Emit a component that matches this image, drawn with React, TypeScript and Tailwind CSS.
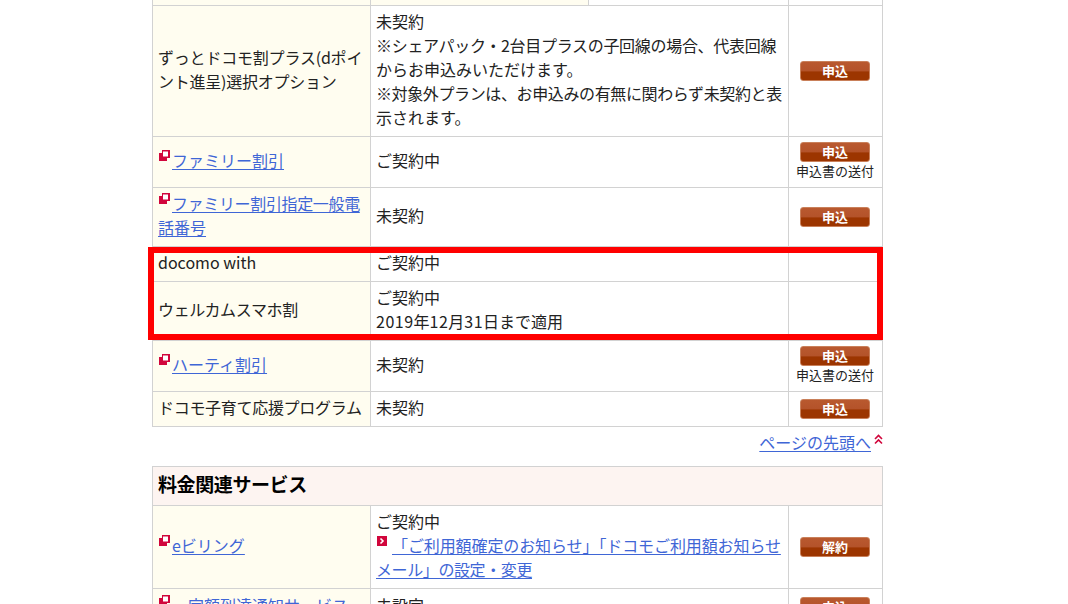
const LINK = "text-[#3f66d6] underline underline-offset-2"

function Book() {
  return (
    <svg width="11" height="11" viewBox="0 0 11 11" className="absolute left-[1px] top-[2px]" aria-hidden="true">
      <path d="M3 0 H11 V8 H8 V11 H0 V3 H3 Z" fill="#d1063c" />
      <rect x="4" y="1.5" width="5" height="5" fill="#fff" />
    </svg>
  )
}

function Button({ label = "申込" }: { label?: string }) {
  return (
    <div className="mx-auto flex h-[20px] w-[70px] items-center justify-center rounded-[3px] border border-[#c9805a] bg-[linear-gradient(#b9592f_0%,#b4532a_48%,#9c3500_56%,#9c3500_100%)] pb-[2px] text-[13px] font-bold leading-none text-white">
      {label}
    </div>
  )
}

function Apply({ note, label }: { note?: boolean; label?: string }) {
  return (
    <div className={`flex flex-col items-center pr-[2px] ${note ? "pb-[2px]" : ""}`}>
      <Button label={label} />
      {note && <span className="whitespace-nowrap text-[13px] leading-[18px] text-[#222]">申込書の送付</span>}
    </div>
  )
}

function Row({
  height,
  name,
  status,
  action,
}: {
  height: string
  name: React.ReactNode
  status: React.ReactNode
  action?: React.ReactNode
}) {
  return (
    <div className={`grid grid-cols-[218px_418px_94px] border-b border-[#d2d2d2] ${height}`}>
      <div className="flex items-center border-r border-[#d2d2d2] bg-[#fffdf0] pb-[4px] pl-[5px]">
        <div className="whitespace-nowrap">{name}</div>
      </div>
      <div className="flex items-center border-r border-[#d2d2d2] pb-[4px] pl-[5px]">
        <div className="whitespace-nowrap">{status}</div>
      </div>
      <div className="flex items-center justify-center">{action}</div>
    </div>
  )
}

function BookLink({ children }: { children: React.ReactNode }) {
  return (
    <div className="relative">
      <Book />
      <span className={LINK}>
        <span className="inline-block w-[14px] bg-white" />
        {children}
      </span>
    </div>
  )
}

export default function App() {
  return (
    <div className="relative h-[604px] w-[1068px] overflow-hidden bg-white font-['Noto_Sans_CJK_JP','Noto_Sans',sans-serif] text-[16px] leading-[24px] text-[#222]">
      <div className="ml-[152px] w-[731px]">
        <div className="border-x border-[#d2d2d2]">
          <div className="grid h-[6px] grid-cols-[218px_218px_200px_94px] border-b border-[#d2d2d2]">
            <div className="border-r border-[#d2d2d2] bg-[#fffdf0]" />
            <div className="border-r border-[#d2d2d2] bg-[#fffdf0]" />
            <div className="border-r border-[#d2d2d2]" />
            <div />
          </div>
          <Row
            height="h-[131px]"
            name={
              <>
                <span className="tracking-[-0.2px]">ずっとドコモ割プラス(dポイ</span>
                <br />
                <span className="tracking-[-0.25px]">ント進呈)選択オプション</span>
              </>
            }
            status={
              <>
                未契約
                <br />
                <span className="tracking-[-0.3px]">※シェアパック・2台目プラスの子回線の場合、代表回線</span>
                <br />
                からお申込みいただけます。
                <br />
                <span className="tracking-[-0.38px]">※対象外プランは、お申込みの有無に関わらず未契約と表</span>
                <br />
                示されます。
              </>
            }
            action={<Apply />}
          />
          <Row height="h-[51px]" name={<BookLink>ファミリー割引</BookLink>} status="ご契約中" action={<Apply note />} />
          <Row
            height="h-[59px]"
            name={
              <BookLink>
                <span className="tracking-[-0.35px]">ファミリー割引指定一般電</span>
                <br />
                話番号
              </BookLink>
            }
            status="未契約"
            action={<Apply />}
          />
          <Row height="h-[35px]" name="docomo with" status="ご契約中" />
          <Row
            height="h-[59px]"
            name={<span className="tracking-[-0.35px]">ウェルカムスマホ割</span>}
            status={
              <>
                ご契約中
                <br />
                <span className="tracking-[0.5px]">2019</span>年<span className="tracking-[0.5px]">12</span>月
                <span className="tracking-[0.5px]">31</span>日まで適用
              </>
            }
          />
          <Row height="h-[51px]" name={<BookLink>ハーティ割引</BookLink>} status="未契約" action={<Apply note />} />
          <Row
            height="h-[35px]"
            name={<span className="tracking-[-0.3px]">ドコモ子育て応援プログラム</span>}
            status="未契約"
            action={<Apply />}
          />
        </div>

        <div className="flex h-[39px] items-center justify-end pb-[10px] pr-[12px]">
          <span className={LINK}>ページの先頭へ</span>
          <svg width="9" height="11" viewBox="0 0 9 11" className="absolute left-[874px] top-[434px]" aria-hidden="true">
            <path d="M1 5 L4.5 1.5 L8 5 M1 9.5 L4.5 6 L8 9.5" fill="none" stroke="#d1063c" strokeWidth="1.6" />
          </svg>
        </div>

        <div className="border-x border-t border-[#d2d2d2]">
          <div className="flex h-[39px] items-center border-b border-[#d2d2d2] bg-[#fdf4f1] pb-[4px] pl-[5px] text-[19px] font-bold tracking-[-0.4px] text-black">
            料金関連サービス
          </div>
          <Row
            height="h-[83px]"
            name={<BookLink>eビリング</BookLink>}
            status={
              <>
                ご契約中
                <br />
                <span className="relative">
                  <svg width="10" height="10" viewBox="0 0 10 10" className="absolute left-[1px] top-[3px]" aria-hidden="true">
                    <rect width="10" height="10" fill="#d1063c" />
                    <path d="M3.5 2.5 L6 5 L3.5 7.5" fill="none" stroke="#fff" strokeWidth="1.6" />
                  </svg>
                  <span className={`${LINK} tracking-[-0.1px]`}>
                    <span className="inline-block w-[16px] bg-white" />
                    「ご利用額確定のお知らせ」「ドコモご利用額お知らせ
                  </span>
                </span>
                <br />
                <span className={`${LINK} tracking-[-0.4px]`}>メール」の設定・変更</span>
              </>
            }
            action={<Apply label="解約" />}
          />
          <Row height="h-[37px]" name={<BookLink>一定額到達通知サービス</BookLink>} status="未設定" action={<Apply />} />
        </div>
      </div>

      <div className="absolute left-[148px] top-[247px] h-[93px] w-[735px] border-[6px] border-[#ff0000]" />
    </div>
  )
}
